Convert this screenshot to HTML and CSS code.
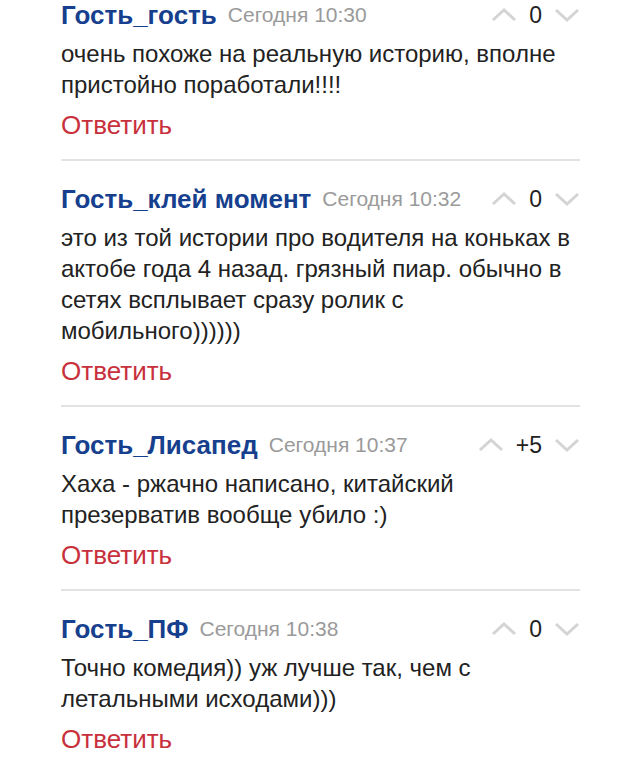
FILE: index.html
```html
<!DOCTYPE html>
<html>
<head>
    <title>Комментарии</title>
    <link rel="stylesheet" href="styles.css">
</head>
<body>

<div class="comments">
    <div class="comment">
        <div class="comment-head">
            <span class="author">Гость_гость</span>
            <span class="date">Сегодня 10:30</span>
            <div class="votes">
                <svg class="arrow" viewBox="0 0 26 14"><polyline points="2,12 13,2 24,12"/></svg>
                <span class="score">0</span>
                <svg class="arrow" viewBox="0 0 26 14"><polyline points="2,2 13,12 24,2"/></svg>
            </div>
        </div>
        <div class="comment-text">очень похоже на реальную историю, вполне пристойно поработали!!!!</div>
        <a class="reply" href="#">Ответить</a>
    </div>

    <div class="comment">
        <div class="comment-head">
            <span class="author">Гость_клей момент</span>
            <span class="date">Сегодня 10:32</span>
            <div class="votes">
                <svg class="arrow" viewBox="0 0 26 14"><polyline points="2,12 13,2 24,12"/></svg>
                <span class="score">0</span>
                <svg class="arrow" viewBox="0 0 26 14"><polyline points="2,2 13,12 24,2"/></svg>
            </div>
        </div>
        <div class="comment-text">это из той истории про водителя на коньках в актобе года 4 назад. грязный пиар. обычно в сетях всплывает сразу ролик с мобильного))))))</div>
        <a class="reply" href="#">Ответить</a>
    </div>

    <div class="comment">
        <div class="comment-head">
            <span class="author">Гость_Лисапед</span>
            <span class="date">Сегодня 10:37</span>
            <div class="votes">
                <svg class="arrow" viewBox="0 0 26 14"><polyline points="2,12 13,2 24,12"/></svg>
                <span class="score">+5</span>
                <svg class="arrow" viewBox="0 0 26 14"><polyline points="2,2 13,12 24,2"/></svg>
            </div>
        </div>
        <div class="comment-text">Хаха - ржачно написано, китайский презерватив вообще убило :)</div>
        <a class="reply" href="#">Ответить</a>
    </div>

    <div class="comment">
        <div class="comment-head">
            <span class="author">Гость_ПФ</span>
            <span class="date">Сегодня 10:38</span>
            <div class="votes">
                <svg class="arrow" viewBox="0 0 26 14"><polyline points="2,12 13,2 24,12"/></svg>
                <span class="score">0</span>
                <svg class="arrow" viewBox="0 0 26 14"><polyline points="2,2 13,12 24,2"/></svg>
            </div>
        </div>
        <div class="comment-text">Точно комедия)) уж лучше так, чем с летальными исходами)))</div>
        <a class="reply" href="#">Ответить</a>
    </div>
</div>

</body>
</html>
```

FILE: styles.css
```css
body {
    font-family: "Liberation Sans", Arial, sans-serif;
    background-color: #fff;
    color: #222;
    margin: 0;
    padding: 0;
}
.comments {
    margin-left: 61px;
    width: 519px;
}
.comment {
    padding: 23px 0 19px;
    border-bottom: 2px solid #e2e2e2;
}
.comment:first-child {
    padding-top: 0;
}
.comment:last-child {
    border-bottom: none;
}
.comment-head {
    display: flex;
    align-items: center;
    height: 30px;
}
.author {
    font-weight: bold;
    font-size: 26px;
    color: #163f8e;
}
.date {
    font-size: 21px;
    color: #9a9a9a;
    margin-left: 11px;
}
.votes {
    margin-left: auto;
    display: flex;
    align-items: center;
    gap: 12px;
}
.arrow {
    width: 26px;
    height: 14px;
}
.arrow polyline {
    fill: none;
    stroke: #d4d4d4;
    stroke-width: 3;
}
.score {
    font-size: 23px;
    color: #222;
}
.comment-text {
    margin-top: 8px;
    font-size: 24px;
    line-height: 31px;
}
.reply {
    display: block;
    margin-top: 10px;
    font-size: 26px;
    line-height: 30px;
    color: #c8303c;
    text-decoration: none;
}
```
